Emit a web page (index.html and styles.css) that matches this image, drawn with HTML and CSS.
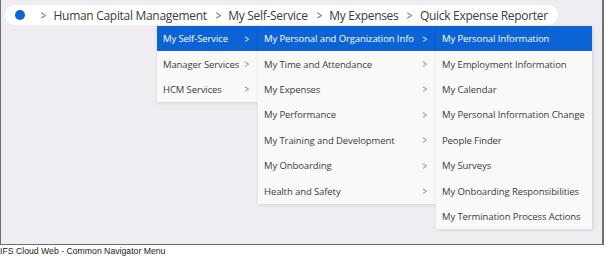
FILE: index.html
```html
<!DOCTYPE html>
<html>
<head>
<meta charset="utf-8">
<link rel="stylesheet" href="styles.css">
</head>
<body>
<div class="frame">
  <div class="crumbs">
    <span class="dot"></span>
    <span class="sep">&gt;</span><span class="crumb">Human Capital Management</span>
    <span class="sep">&gt;</span><span class="crumb">My Self-Service</span>
    <span class="sep">&gt;</span><span class="crumb">My Expenses</span>
    <span class="sep">&gt;</span><span class="crumb">Quick Expense Reporter</span>
  </div>
  <div class="menus">
    <ul class="menu m1">
      <li class="item active"><span>My Self-Service</span><i>&gt;</i></li>
      <li class="item"><span>Manager Services</span><i>&gt;</i></li>
      <li class="item"><span>HCM Services</span><i>&gt;</i></li>
    </ul>
    <ul class="menu m2">
      <li class="item active"><span>My Personal and Organization Info</span><i>&gt;</i></li>
      <li class="item"><span>My Time and Attendance</span><i>&gt;</i></li>
      <li class="item"><span>My Expenses</span><i>&gt;</i></li>
      <li class="item"><span>My Performance</span><i>&gt;</i></li>
      <li class="item"><span>My Training and Development</span><i>&gt;</i></li>
      <li class="item"><span>My Onboarding</span><i>&gt;</i></li>
      <li class="item"><span>Health and Safety</span><i>&gt;</i></li>
    </ul>
    <ul class="menu m3">
      <li class="item active"><span>My Personal Information</span></li>
      <li class="item"><span>My Employment Information</span></li>
      <li class="item"><span>My Calendar</span></li>
      <li class="item"><span>My Personal Information Change</span></li>
      <li class="item"><span>People Finder</span></li>
      <li class="item"><span>My Surveys</span></li>
      <li class="item"><span>My Onboarding Responsibilities</span></li>
      <li class="item"><span>My Termination Process Actions</span></li>
    </ul>
  </div>
</div>
<div class="caption">IFS Cloud Web - Common Navigator Menu</div>
</body>
</html>
```
FILE: styles.css
```css
html, body {
  margin: 0;
  padding: 0;
  background: #ffffff;
}
.frame {
  box-sizing: border-box;
  width: 604px;
  height: 245px;
  background: #efedf1;
  border-left: 1px solid #6e6e6e;
  border-right: 2px solid #6e6e6e;
  border-bottom: 1px solid #6e6e6e;
  padding: 5px 0 0 4px;
  font-family: "Open Sans", sans-serif;
  color: #3a3a3a;
}
.crumbs {
  display: flex;
  align-items: center;
  width: 553px;
  height: 20px;
  box-sizing: border-box;
  background: #ffffff;
  border-radius: 10px;
  padding-left: 10px;
  font-size: 12px;
  letter-spacing: -0.3px;
  color: #3c3c3c;
  white-space: nowrap;
}
.dot {
  flex-shrink: 0;
  width: 10px;
  height: 10px;
  border-radius: 50%;
  background: #0b63d6;
  margin-right: 15px;
}
.sep {
  color: #555;
  margin-right: 7px;
  transform: scaleX(0.8);
}
.crumb {
  margin-right: 8px;
}
.menus {
  display: flex;
  align-items: flex-start;
  margin: 1px 0 0 152px;
}
.menu {
  list-style: none;
  margin: 0;
  padding: 0;
  background: #f9f9f9;
  box-shadow: 1px 1px 4px rgba(0,0,0,0.12);
}
.m1 { width: 101px; }
.m2 { width: 178px; }
.m3 { width: 156px; }
.item {
  display: flex;
  align-items: center;
  justify-content: space-between;
  height: 25.4px;
  padding: 0 8px 0 6px;
  font-size: 9.5px;
  letter-spacing: -0.1px;
  color: #3c3c3c;
  white-space: nowrap;
}
.item i {
  font-style: normal;
  color: #777;
  font-size: 10px;
  transform: scaleX(0.8);
}
.item.active {
  background: #0b63d6;
  color: #ffffff;
}
.item.active i {
  color: #ffffff;
}
.caption {
  font-family: "Liberation Sans", Arial, sans-serif;
  font-size: 8.7px;
  color: #222;
  padding-top: 1px;
}
```
